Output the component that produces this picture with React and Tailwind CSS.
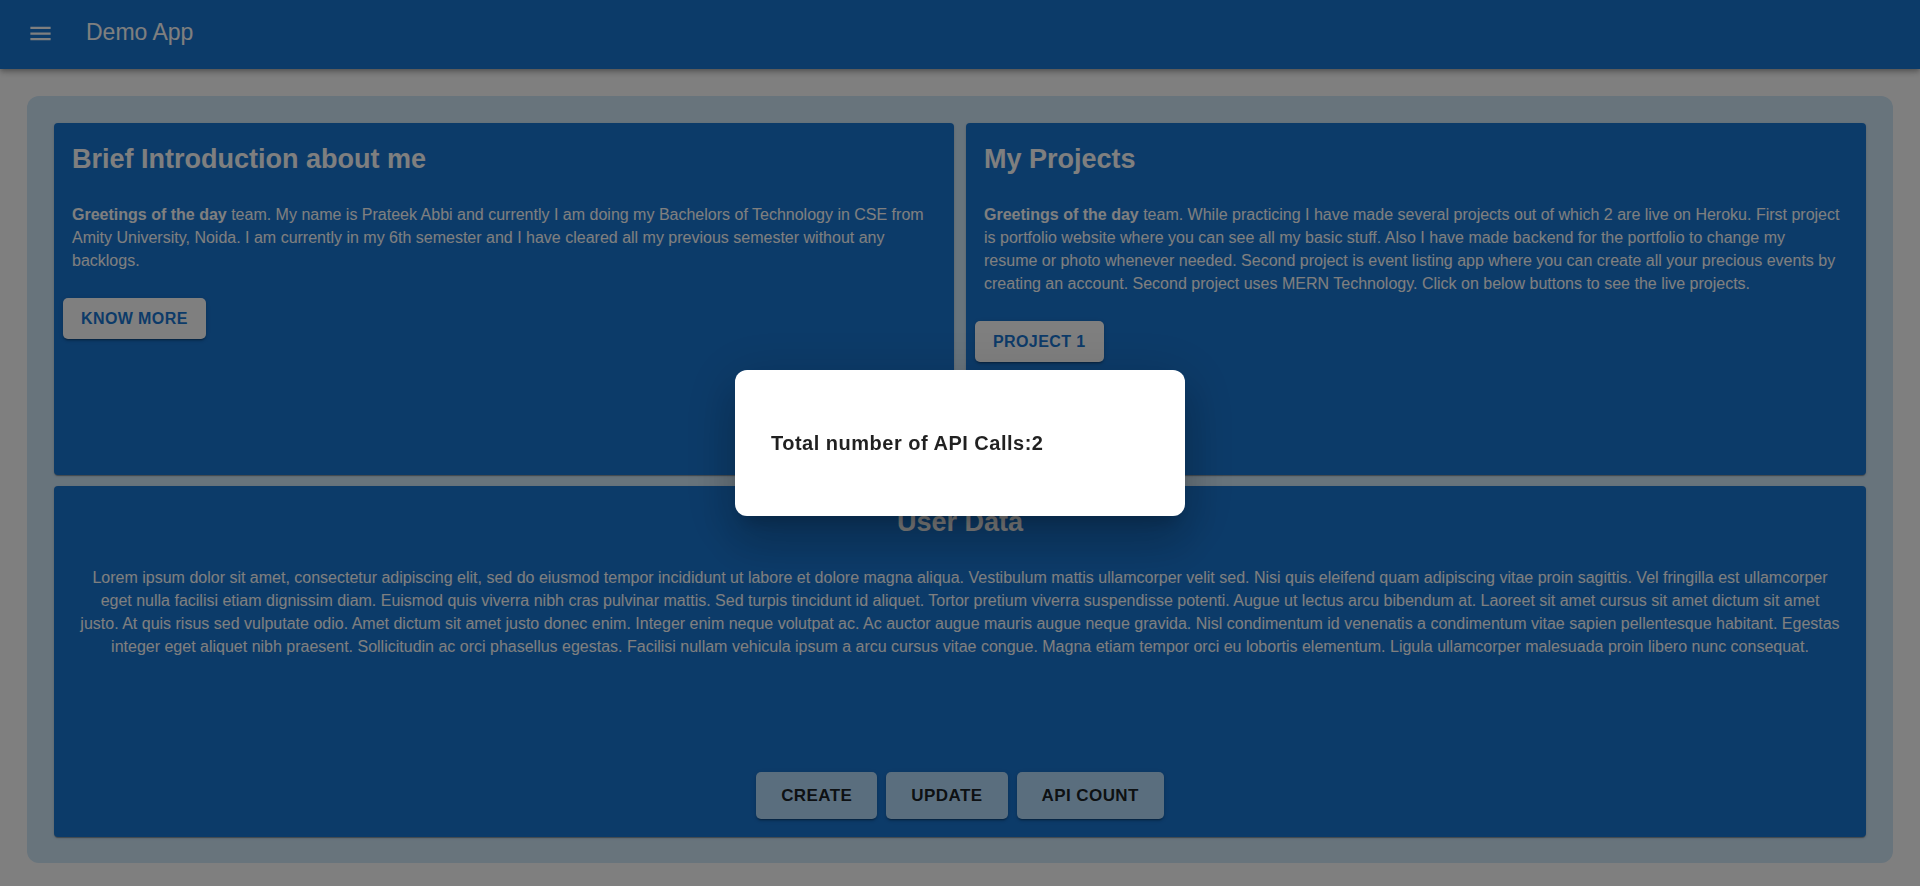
const paperShadow =
  "shadow-[0px_2px_1px_-1px_rgba(0,0,0,0.2),0px_1px_1px_0px_rgba(0,0,0,0.14),0px_1px_3px_0px_rgba(0,0,0,0.12)]";
const raisedShadow =
  "shadow-[0px_3px_1px_-2px_rgba(0,0,0,0.2),0px_2px_2px_0px_rgba(0,0,0,0.14),0px_1px_5px_0px_rgba(0,0,0,0.12)]";

function MenuIcon() {
  return (
    <svg className="size-[27px]" viewBox="0 0 24 24" fill="currentColor" aria-hidden="true">
      <path d="M3 18h18v-2H3v2zm0-5h18v-2H3v2zm0-7v2h18V6H3z" />
    </svg>
  );
}

function AppBar() {
  return (
    <header className="relative flex items-start gap-8 bg-[#1976d2] px-[27px] pt-5 pb-[22px] text-white shadow-[0px_2px_4px_-1px_rgba(0,0,0,0.2),0px_4px_5px_0px_rgba(0,0,0,0.14),0px_1px_10px_0px_rgba(0,0,0,0.12)]">
      <button type="button" aria-label="Menu">
        <MenuIcon />
      </button>
      <h1 className="text-[23px] leading-6">Demo App</h1>
    </header>
  );
}

function Card({ title, className = "", children }) {
  return (
    <section className={`flex flex-col rounded bg-[#1976d2] px-[18px] pt-[18px] text-white ${paperShadow} ${className}`}>
      <h2 className="text-[27px] leading-9 font-bold">{title}</h2>
      {children}
    </section>
  );
}

function LinkButton({ children }) {
  return (
    <button
      type="button"
      className={`mt-[26px] -ml-[9px] self-start rounded-[5px] bg-white px-[18px] py-2 text-base leading-[25px] font-bold tracking-wide text-[#1976d2] uppercase ${raisedShadow}`}
    >
      {children}
    </button>
  );
}

function ActionButton({ children }) {
  return (
    <button
      type="button"
      className={`rounded-[5px] bg-[#b4dcfc] px-[25px] py-[11px] text-[17px] leading-[25px] font-bold tracking-wide text-black/87 uppercase ${raisedShadow}`}
    >
      {children}
    </button>
  );
}

function ApiCountDialog({ count }) {
  return (
    <div className="fixed inset-0 z-10 flex items-center justify-center bg-black/50">
      <div
        role="dialog"
        aria-modal="true"
        aria-labelledby="api-count"
        className="w-[450px] rounded-xl bg-white px-9 py-[60px] shadow-[0px_12px_17px_-8px_rgba(0,0,0,0.2),0px_27px_43px_3px_rgba(0,0,0,0.14),0px_10px_52px_9px_rgba(0,0,0,0.12)]"
      >
        <p id="api-count" className="text-xl leading-[26px] font-bold tracking-wide text-black/87">
          Total number of API Calls:{count}
        </p>
      </div>
    </div>
  );
}

export default function App() {
  return (
    <div className="flex min-h-screen flex-col bg-white font-['Liberation_Sans',Arial,sans-serif]">
      <AppBar />
      <main className="mx-[27px] mt-[27px] mb-[23px] grid flex-1 grid-cols-2 grid-rows-2 gap-x-3 gap-y-[11px] rounded-xl bg-[#d0e8f9] px-[27px] pt-[27px] pb-[26px]">
        <Card title="Brief Introduction about me">
          <p className="mt-[26px] text-base leading-[23px]">
            <strong>Greetings of the day</strong> team. My name is Prateek Abbi and currently I am doing my
            Bachelors of Technology in CSE from Amity University, Noida. I am currently in my 6th semester and I
            have cleared all my previous semester without any backlogs.
          </p>
          <LinkButton>Know More</LinkButton>
        </Card>
        <Card title="My Projects">
          <p className="mt-[26px] text-base leading-[23px]">
            <strong>Greetings of the day</strong> team. While practicing I have made several projects out of
            which 2 are live on Heroku. First project is portfolio website where you can see all my basic stuff.
            Also I have made backend for the portfolio to change my
            <br />
            resume or photo whenever needed. Second project is event listing app where you can create all your
            precious events by creating an account. Second project uses MERN Technology. Click on below buttons
            to see the live projects.
          </p>
          <LinkButton>Project 1</LinkButton>
        </Card>
        <Card title="User Data" className="col-span-2 pb-[18px] text-center">
          <p className="mt-[26px] text-base leading-[23px]">
            Lorem ipsum dolor sit amet, consectetur adipiscing elit, sed do eiusmod tempor incididunt ut labore et
            dolore magna aliqua. Vestibulum mattis ullamcorper velit sed. Nisi quis eleifend quam adipiscing vitae
            proin sagittis. Vel fringilla est ullamcorper
            <br />
            eget nulla facilisi etiam dignissim diam. Euismod quis viverra nibh cras pulvinar mattis. Sed turpis
            tincidunt id aliquet. Tortor pretium viverra suspendisse potenti. Augue ut lectus arcu bibendum at.
            Laoreet sit amet cursus sit amet dictum sit amet
            <br />
            justo. At quis risus sed vulputate odio. Amet dictum sit amet justo donec enim. Integer enim neque
            volutpat ac. Ac auctor augue mauris augue neque gravida. Nisl condimentum id venenatis a condimentum
            vitae sapien pellentesque habitant. Egestas integer eget aliquet nibh praesent. Sollicitudin ac orci
            phasellus egestas. Facilisi nullam vehicula ipsum a arcu cursus vitae congue. Magna etiam tempor orci
            eu lobortis elementum. Ligula ullamcorper malesuada proin libero nunc consequat.
          </p>
          <div className="mt-auto flex justify-center gap-[9px]">
            <ActionButton>Create</ActionButton>
            <ActionButton>Update</ActionButton>
            <ActionButton>API Count</ActionButton>
          </div>
        </Card>
      </main>
      <ApiCountDialog count={2} />
    </div>
  );
}
